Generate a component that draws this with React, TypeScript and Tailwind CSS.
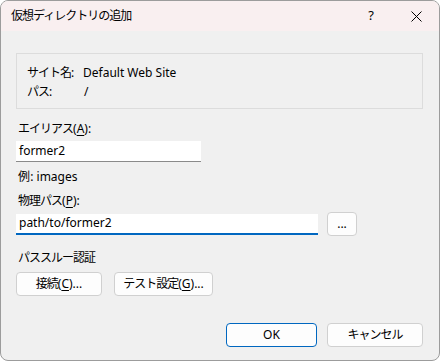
const font = "font-['Noto_Sans','Noto_Sans_CJK_JP',sans-serif]";

// Japanese runs: Yu Gothic UI kana are narrower than Noto CJK, so tighten them a little
function J({ children }: { children: React.ReactNode }) {
  return <span className="tracking-[-1px]">{children}</span>;
}

function Key({ k }: { k: string }) {
  return (
    <>
      (<span className="underline underline-offset-2">{k}</span>)
    </>
  );
}

function Button({ children, primary, className }: { children: React.ReactNode; primary?: boolean; className?: string }) {
  return (
    <button
      className={`h-[24px] rounded-[4px] bg-[#fdfdfd] text-[12px] text-black ${
        primary ? "border border-[#0067c0]" : "border border-[#d0d0d0]"
      } ${className ?? ""}`}
    >
      {children}
    </button>
  );
}

export default function App() {
  return (
    <div className={`w-[440px] h-[362px] bg-white ${font}`}>
      <div className="w-[440px] h-[361px] rounded-[8px] border border-[#9c9c9c] overflow-hidden flex flex-col bg-[#f0f0f0]">
        <div className="h-[30px] shrink-0 bg-[#f9eff0] flex items-center pl-[10px] text-[12px] text-black">
          <span className="flex-1">
            <J>仮想ディレクトリの追加</J>
          </span>
          <span className="w-[46px] text-center text-[13px] mr-[-1px]">?</span>
          <span className="w-[46px] h-[30px] flex items-center justify-center">
            <svg width="11" height="11" viewBox="0 0 11 11">
              <path d="M0.5 0.5 L10.5 10.5 M10.5 0.5 L0.5 10.5" stroke="#000" strokeWidth="1" />
            </svg>
          </span>
        </div>

        <div className="flex-1 flex flex-col pl-[15px] pr-[16px] text-[12px] text-black">
          <div className="mt-[22px] h-[56px] border border-[#dcdcdc] pt-[9px] pl-[10px] leading-[19px]">
            <div className="flex">
              <span className="w-[56px]">
                <J>サイト名</J>:
              </span>
              <span>Default Web Site</span>
            </div>
            <div className="flex">
              <span className="w-[57px]">
                <J>パス</J>:
              </span>
              <span>/</span>
            </div>
          </div>

          <div className="mt-[12px] pl-[2px] leading-[16px]">
            <J>エイリアス</J>
            <Key k="A" />:
          </div>
          <div className="mt-[4px] w-[185px] h-[21px] bg-white border-b border-[#8a8a8a] flex items-center pl-[3px]">
            former2
          </div>
          <div className="mt-[7px] pl-[2px] leading-[16px]">
            <J>例</J>&#8202;: images
          </div>

          <div className="mt-[8px] pl-[2px] leading-[16px]">
            <J>物理パス</J>
            <Key k="P" />:
          </div>
          <div className="mt-[3px] flex items-center">
            <div className="w-[302px] h-[21px] bg-white border-b-2 border-[#0067c0] flex items-center pl-[3px]">
              path/to/former2
            </div>
            <Button className="ml-[9px] w-[30px]">...</Button>
          </div>

          <div className="mt-[14px] pl-[2px] leading-[16px]">
            <J>パススルー認証</J>
          </div>
          <div className="mt-[6px] flex gap-[12px]">
            <Button className="w-[86px]">
              <J>接続</J>
              <Key k="C" />...
            </Button>
            <Button className="w-[99px]">
              <J>テスト設定</J>
              <Key k="G" />...
            </Button>
          </div>

          <div className="mt-[27px] flex justify-end gap-[10px]">
            <Button primary className="w-[91px]">OK</Button>
            <Button className="w-[96px]">
              <J>キャンセル</J>
            </Button>
          </div>
        </div>
      </div>
    </div>
  );
}
